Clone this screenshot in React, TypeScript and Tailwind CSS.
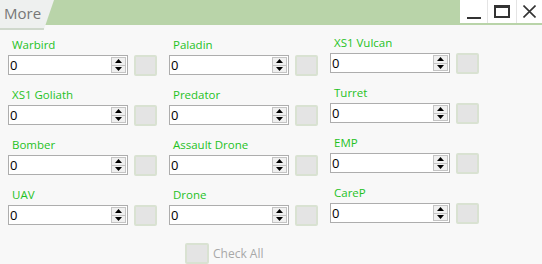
import React from 'react';

type Field = { label: string };

const columns: Field[][] = [
  [{ label: 'Warbird' }, { label: 'XS1 Goliath' }, { label: 'Bomber' }, { label: 'UAV' }],
  [{ label: 'Paladin' }, { label: 'Predator' }, { label: 'Assault Drone' }, { label: 'Drone' }],
  [{ label: 'XS1 Vulcan' }, { label: 'Turret' }, { label: 'EMP' }, { label: 'CareP' }],
];

const font = { fontFamily: '"Open Sans", "Noto Sans", sans-serif' };

const Spinner = () => (
  <div className="flex flex-col w-[15px] h-[16px] border border-[#c4c4c4] bg-[#f0f0f0] mr-[1px]">
    <div className="flex-1 flex items-center justify-center border-b border-[#c4c4c4]">
      <svg width="7" height="4" viewBox="0 0 7 4">
        <polygon points="3.5,0 7,4 0,4" fill="#000" />
      </svg>
    </div>
    <div className="flex-1 flex items-center justify-center">
      <svg width="7" height="4" viewBox="0 0 7 4">
        <polygon points="0,0 7,0 3.5,4" fill="#000" />
      </svg>
    </div>
  </div>
);

const NumberBox = () => (
  <div className="flex items-center w-[120px] h-[20px] border border-[#adadad] bg-white">
    <span className="flex-1 pl-[1px] text-[13px] leading-none text-black">0</span>
    <Spinner />
  </div>
);

const CheckBox = () => (
  <div className="w-[23px] h-[21px] rounded-[2px] border-2 border-[#d9e2d2] bg-[#e4e4e4]" />
);

const FieldCell = ({ field }: { field: Field }) => (
  <div className="flex flex-col h-[50px]">
    <div className="pl-[4px] h-[16px] text-[11.5px] leading-[16px] text-[#1fc21f]">{field.label}</div>
    <div className="flex items-start gap-[6px] mt-[2px]">
      <NumberBox />
      <CheckBox />
    </div>
  </div>
);

const App: React.FC = () => {
  return (
    <div className="w-[542px] h-[264px] bg-[#f8f8f8] flex flex-col overflow-hidden" style={font}>
      {/* Title bar */}
      <div className="flex items-start h-[25px] bg-[#b9d4a9] shrink-0">
        <div
          className="relative z-10 h-[30px] w-[54px] bg-[#eef0ef] pl-[4px] pt-[3px] text-[15px] leading-[20px] text-[#777]"
          style={{ clipPath: 'polygon(0 0, 100% 0, 81% 100%, 0 100%)' }}
        >
          More
          <div className="absolute left-0 bottom-0 w-[44px] h-[2px] bg-[#cfd8cc]" />
        </div>
        <div className="flex-1" />
        <div className="flex h-[23px] bg-white">
          <div className="w-[28px] flex items-end justify-center pb-[4px] border-r border-[#e4e4e4]">
            <div className="w-[14px] h-[2px] bg-[#333]" />
          </div>
          <div className="w-[29px] flex items-center justify-center border-r border-[#e4e4e4]">
            <div className="w-[16px] h-[13px] border-2 border-t-[3px] border-[#333]" />
          </div>
          <div className="w-[25px] flex items-center justify-center">
            <svg width="13" height="13" viewBox="0 0 13 13">
              <path d="M0.5 0.5 L12.5 12.5 M12.5 0.5 L0.5 12.5" stroke="#333" strokeWidth="1.6" />
            </svg>
          </div>
        </div>
      </div>

      {/* Body */}
      <div className="flex-1 flex flex-col pt-[12px]">
        <div className="flex pl-[8px] gap-[12px]">
          {columns.map((col, ci) => (
            <div
              key={ci}
              className={`flex flex-col w-[149px] ${ci === 2 ? '-mt-[2px]' : ''}`}
            >
              {col.map((f) => (
                <FieldCell key={f.label} field={f} />
              ))}
            </div>
          ))}
        </div>
        <div className="flex items-center gap-[4px] pl-[185px] mt-[6px]">
          <div className="w-[24px] h-[21px] rounded-[2px] border-2 border-[#d9e2d2] bg-[#e4e4e4]" />
          <span className="text-[12px] text-[#a8a8a8]">Check All</span>
        </div>
      </div>

      {/* Bottom edge */}
      <div className="h-[1px] bg-[#8a8a8a] shrink-0" />
      <div className="flex h-[1px] shrink-0 bg-white">
        <div className="w-[18px] bg-black" />
        <div className="w-[14px]" />
        <div className="w-[88px] bg-[#d5dfcf]" />
        <div className="w-[92px]" />
        <div className="w-[88px] bg-[#d5dfcf]" />
        <div className="w-[70px]" />
        <div className="w-[88px] bg-[#d5dfcf]" />
        <div className="w-[45px]" />
        <div className="w-[1px] bg-black" />
      </div>
    </div>
  );
};

export default App;
